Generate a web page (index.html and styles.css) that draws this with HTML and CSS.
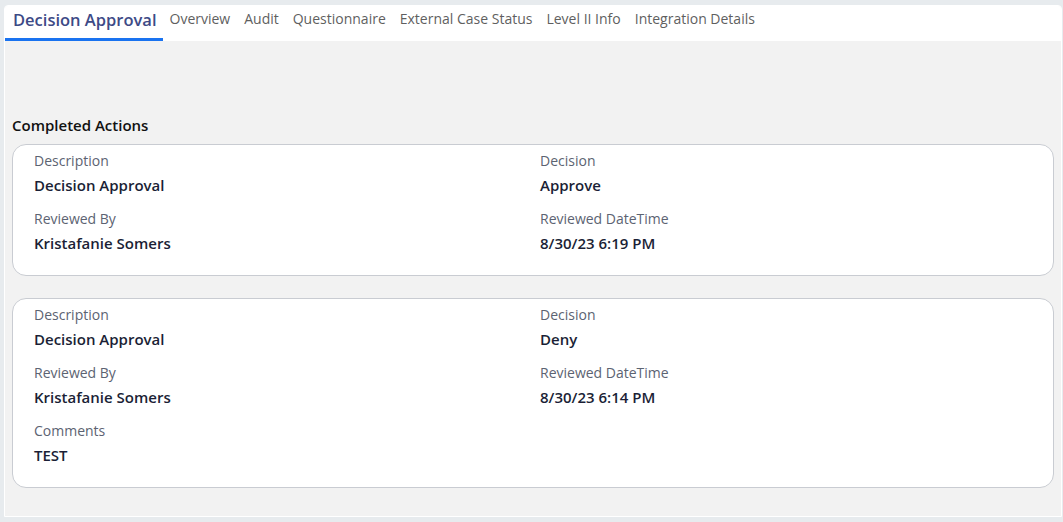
FILE: index.html
```html
<!DOCTYPE html>
<html lang="en">
<head>
  <meta charset="UTF-8">
  <meta name="viewport" content="width=device-width, initial-scale=1.0">
  <title>Decision Approval</title>
  <link rel="stylesheet" href="styles.css">
</head>
<body>
  <div class="panel">
    <nav class="tabs">
      <a class="tab active">Decision Approval</a>
      <a class="tab">Overview</a>
      <a class="tab">Audit</a>
      <a class="tab">Questionnaire</a>
      <a class="tab">External Case Status</a>
      <a class="tab">Level II Info</a>
      <a class="tab">Integration Details</a>
    </nav>

    <div class="content">
      <h2 class="section-title">Completed Actions</h2>

      <div class="card">
        <div class="field">
          <div class="label">Description</div>
          <div class="value">Decision Approval</div>
        </div>
        <div class="field">
          <div class="label">Decision</div>
          <div class="value">Approve</div>
        </div>
        <div class="field">
          <div class="label">Reviewed By</div>
          <div class="value">Kristafanie Somers</div>
        </div>
        <div class="field">
          <div class="label">Reviewed DateTime</div>
          <div class="value">8/30/23 6:19 PM</div>
        </div>
      </div>

      <div class="card">
        <div class="field">
          <div class="label">Description</div>
          <div class="value">Decision Approval</div>
        </div>
        <div class="field">
          <div class="label">Decision</div>
          <div class="value">Deny</div>
        </div>
        <div class="field">
          <div class="label">Reviewed By</div>
          <div class="value">Kristafanie Somers</div>
        </div>
        <div class="field">
          <div class="label">Reviewed DateTime</div>
          <div class="value">8/30/23 6:14 PM</div>
        </div>
        <div class="field">
          <div class="label">Comments</div>
          <div class="value">TEST</div>
        </div>
      </div>
    </div>
  </div>
</body>
</html>
```

FILE: styles.css
```css
* {
  box-sizing: border-box;
}

body {
  margin: 0;
  padding: 5px 1px 5px 4px;
  background-color: #e7ebee;
  font-family: 'Open Sans', 'Noto Sans', sans-serif;
  height: 522px;
  overflow: hidden;
}

.panel {
  height: 512px;
  background-color: #f2f2f2;
  border: 1px solid #fff;
  border-radius: 4px 4px 0 0;
  overflow: hidden;
}

.tabs {
  display: flex;
  align-items: stretch;
  height: 35px;
  background: #fff;
}

.tab {
  display: flex;
  align-items: center;
  padding: 0 7px 7px;
  font-size: 14px;
  color: #5f5f5f;
  border-bottom: 3px solid transparent;
  cursor: pointer;
}

.tab.active {
  padding: 0 6px 5px 8px;
  font-size: 16.5px;
  font-weight: 600;
  color: #3d4a86;
  border-bottom-color: #1a73f0;
}

.content {
  padding: 74px 7px 0;
}

.section-title {
  margin: 0 0 8px;
  font-size: 15px;
  line-height: 21px;
  font-weight: 600;
  color: #111;
}

.card {
  display: grid;
  grid-template-columns: 506px 1fr;
  row-gap: 13px;
  background: #fff;
  border: 1px solid #c9ccd2;
  border-radius: 14px;
  padding: 6px 20px 21px 21px;
  margin-bottom: 22px;
}

.label {
  font-size: 14px;
  line-height: 20px;
  color: #5c6372;
  margin-bottom: 3px;
}

.value {
  font-size: 15px;
  line-height: 22px;
  font-weight: 600;
  color: #1b1f36;
}
```
